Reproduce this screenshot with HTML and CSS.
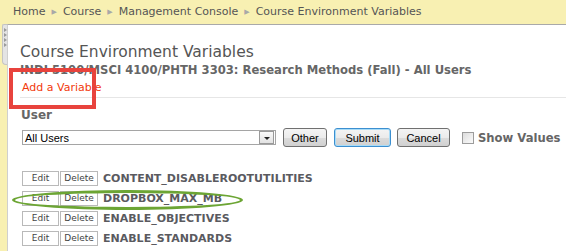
FILE: index.html
```html
<!DOCTYPE html>
<html>
  <head>
    <title>Course Environment Variables</title>
    <meta name="viewport" content="width=device-width, initial-scale=1" />
    <link rel="stylesheet" href="styles.css">
  </head>
  <body>
    <div class="crumbs">
      <span>Home</span><span class="sep">&#9654;</span><span>Course</span><span class="sep">&#9654;</span><span>Management Console</span><span class="sep">&#9654;</span><span>Course Environment Variables</span>
    </div>
    <div class="page">
      <div class="side">
        <div class="tab">
          <span class="arrow"></span>
          <span class="arrow"></span>
          <span class="arrow"></span>
          <span class="arrow"></span>
        </div>
      </div>
      <div class="panel">
        <h1>Course Environment Variables</h1>
        <h2 class="course">INDI 5100/MSCI 4100/PHTH 3303: Research Methods (Fall) - All Users</h2>
        <a class="add" href="#">Add a Variable</a>
        <div class="rule"></div>
        <div class="label">User</div>
        <div class="filter">
          <div class="select">
            <span>All Users</span>
            <span class="drop"><span class="caret"></span></span>
          </div>
          <button class="btn other">Other</button>
          <button class="btn submit">Submit</button>
          <button class="btn cancel">Cancel</button>
          <label class="show"><span class="check"></span>Show Values</label>
        </div>
        <div class="vars">
          <div class="row"><button class="small edit">Edit</button><button class="small del">Delete</button><span class="name">CONTENT_DISABLEROOTUTILITIES</span></div>
          <div class="row"><button class="small edit">Edit</button><button class="small del">Delete</button><span class="name">DROPBOX_MAX_MB</span></div>
          <div class="row"><button class="small edit">Edit</button><button class="small del">Delete</button><span class="name">ENABLE_OBJECTIVES</span></div>
          <div class="row"><button class="small edit">Edit</button><button class="small del">Delete</button><span class="name">ENABLE_STANDARDS</span></div>
        </div>
        <!-- annotations -->
        <div class="mark-box"></div>
        <div class="mark-ring"></div>
      </div>
    </div>
  </body>
</html>
```

FILE: styles.css
```css
html {
  font-family: "DejaVu Sans", Verdana, sans-serif;
}
body {
  margin: 0;
  background-color: #f8f0b2;
  overflow: hidden;
  height: 251px;
}
.crumbs {
  height: 24px;
  line-height: 24px;
  padding-left: 13px;
  font-size: 11px;
  color: #555;
  white-space: nowrap;
}
.crumbs .sep {
  font-size: 7px;
  color: #a8a8a8;
  margin: 0 6px;
  vertical-align: 1px;
}
.page {
  display: flex;
  height: 227px;
  overflow: hidden;
}
.side {
  width: 7px;
  flex: none;
}
.tab {
  margin-left: 2px;
  width: 5px;
  height: 36px;
  background: #e4e4e4;
  border: 1px solid #c4c4c4;
  border-right: none;
  border-radius: 2px 0 0 4px;
  display: flex;
  flex-direction: column;
  padding-top: 3px;
  gap: 1px;
  box-sizing: content-box;
}
.arrow {
  width: 0;
  height: 0;
  margin-left: 1px;
  border-left: 3px solid #9a9a9a;
  border-top: 2px solid transparent;
  border-bottom: 2px solid transparent;
}
.panel {
  position: relative;
  flex: 1;
  background: #fff;
  border-top: 1px solid #a9a9a9;
  border-left: 1px solid #cfcfcf;
  padding-left: 12px;
}
h1 {
  font-size: 15.5px;
  font-weight: normal;
  color: #555;
  margin: 17px 0 0;
  line-height: 20px;
}
.course {
  font-size: 11.6px;
  font-weight: bold;
  color: #666;
  margin: 1px 0 0;
  line-height: 14px;
}
.add {
  display: block;
  font-size: 11px;
  color: #f23a0c;
  text-decoration: none;
  margin: 4px 0 0 2px;
  line-height: 14px;
}
.rule {
  height: 1px;
  background: #e6e6e6;
  margin-top: 2px;
}
.label {
  font-size: 12px;
  font-weight: bold;
  color: #666;
  margin: 10px 0 0 1px;
  line-height: 14px;
}
.filter {
  display: flex;
  align-items: center;
  margin-top: 6px;
  height: 19px;
}
.select {
  width: 250px;
  height: 13px;
  border: 1px solid #a5a5a5;
  margin-left: 2px;
  display: flex;
  align-items: center;
  justify-content: space-between;
  font-family: "Liberation Sans", Arial, sans-serif;
  font-size: 11px;
  color: #000;
  padding-left: 2px;
}
.drop {
  width: 13px;
  height: 11px;
  margin-right: 1px;
  border: 1px solid #9a9a9a;
  background: linear-gradient(#fafafa, #e2e2e2);
  display: flex;
  align-items: center;
  justify-content: center;
}
.caret {
  width: 0;
  height: 0;
  border-top: 3px solid #222;
  border-left: 3px solid transparent;
  border-right: 3px solid transparent;
  margin-top: 2px;
}
.btn {
  height: 19px;
  padding: 0;
  border: 1px solid #707070;
  border-radius: 3px;
  background: linear-gradient(#f4f4f4 0%, #ebebeb 50%, #dcdcdc 51%, #d0d0d0 100%);
  font-family: "Liberation Sans", Arial, sans-serif;
  font-size: 11px;
  color: #000;
}
.other {
  width: 44px;
  margin-left: 7px;
}
.submit {
  width: 57px;
  margin-left: 7px;
  border-color: #3c8fd0;
  box-shadow: inset 0 0 0 1px #a8dcf8;
}
.cancel {
  width: 53px;
  margin-left: 6px;
}
.show {
  display: flex;
  align-items: center;
  margin-left: 12px;
  font-size: 11.6px;
  font-weight: bold;
  color: #666;
}
.check {
  width: 10px;
  height: 10px;
  border: 1px solid #9c9c9c;
  background: linear-gradient(135deg, #dcdcdc, #fbfbfb);
  margin-right: 4px;
}
.vars {
  margin-top: 21px;
}
.row {
  display: flex;
  align-items: center;
  height: 20px;
  margin-left: 2px;
}
.small {
  height: 15px;
  padding: 0;
  border: 1px solid #b9b9b9;
  background: #fff;
  font-family: "DejaVu Sans", Verdana, sans-serif;
  font-size: 9px;
  color: #444;
  box-shadow: inset 0 0 0 1px #fff;
}
.edit {
  width: 37px;
}
.del {
  width: 38px;
  margin-left: 1px;
}
.name {
  margin-left: 5px;
  font-size: 11px;
  font-weight: bold;
  color: #5a5a5f;
}
.mark-box {
  position: absolute;
  left: 1px;
  top: 43px;
  width: 79px;
  height: 33px;
  border: 4px solid #e8433d;
}
.mark-ring {
  position: absolute;
  left: 4px;
  top: 165px;
  width: 225px;
  height: 14px;
  border: 3px solid #6ca534;
  border-radius: 50%;
}
```
